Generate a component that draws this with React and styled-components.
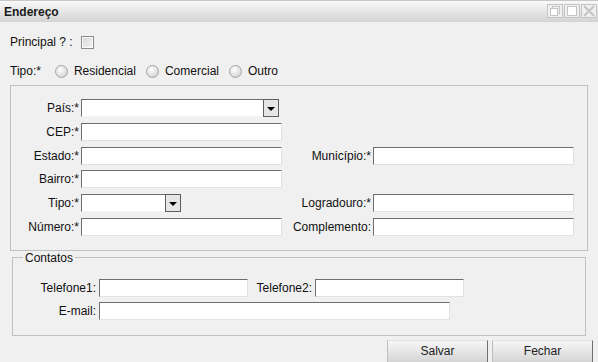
import React from 'react'
import styled, { createGlobalStyle } from 'styled-components'

const GlobalStyle = createGlobalStyle`
  html, body {
    margin: 0;
    padding: 0;
    background: #f0f0f0;
  }
  body {
    font-family: "Liberation Sans", Arial, sans-serif;
    font-size: 12px;
    color: #111;
  }
`

const Window = styled.div`
  width: 598px;
  height: 362px;
  display: flex;
  flex-direction: column;
  background: #f0f0f0;
  overflow: hidden;

  & > * {
    flex-shrink: 0;
  }
`

const TitleBar = styled.div`
  height: 22px;
  box-sizing: border-box;
  border-top: 1px solid #c8c8c8;
  background: linear-gradient(#f9f9f9, #d3d3d3);
  display: flex;
  align-items: center;
  padding: 0 1px 0 4px;
`

const Title = styled.span`
  flex: 1;
  font-weight: bold;
  color: #1a1a1a;
`

const WinButtons = styled.div`
  display: flex;
  align-items: center;
  gap: 1px;
  margin-top: -2px;
`

const Line = styled.div`
  display: flex;
  align-items: center;
  height: 18px;
  margin: ${({ $top }) => $top}px 0 0 10px;
  gap: ${({ $gap }) => $gap}px;
`

const CheckBox = styled.span`
  width: 11px;
  height: 11px;
  border: 1px solid #8c8c8c;
  box-shadow: inset 0 0 0 1px #fafafa;
  background: linear-gradient(135deg, #d6d6d6, #f6f6f6);
`

const RadioGroup = styled.div`
  display: flex;
  gap: 10px;
`

const RadioItem = styled.label`
  display: flex;
  align-items: center;
  gap: 6px;
`

const Radio = styled.span`
  width: 11px;
  height: 11px;
  border-radius: 50%;
  border: 1px solid #a4a4a4;
  background: radial-gradient(circle at 40% 35%, #ffffff 0%, #e6e6e6 45%, #c8c8c8 100%);
`

const Fieldset = styled.fieldset`
  margin: ${({ $top }) => $top}px ${({ $side }) => $side}px 0 ${({ $side }) => $side}px;
  padding: ${({ $pt }) => $pt}px 0 ${({ $pb }) => $pb}px 0;
  border: 1px solid #c0c0c0;
  display: flex;
  flex-direction: column;
  gap: ${({ $gap }) => $gap}px;
  min-width: 0;
`

const Legend = styled.legend`
  margin-left: 10px;
  padding: 0 2px;
  line-height: 14px;
  color: #111;
`

const FieldRow = styled.div`
  display: grid;
  grid-template-columns: ${({ $cols }) => $cols};
  column-gap: ${({ $colGap }) => $colGap}px;
  height: 18px;
  align-items: center;
`

const Label = styled.span`
  text-align: right;
  white-space: nowrap;
`

const TextBox = styled.div`
  box-sizing: border-box;
  height: 18px;
  width: ${({ $w }) => ($w ? `${$w}px` : '100%')};
  background: #fff;
  border: 1px solid;
  border-color: #6e6e6e #e2e2e2 #e2e2e2 #6e6e6e;
  grid-column: ${({ $span }) => $span || 'auto'};
`

const Combo = styled(TextBox)`
  display: flex;
  justify-content: flex-end;
  border-right: none;
  border-bottom-color: #f4f4f4;
`

const ComboButton = styled.span`
  box-sizing: border-box;
  width: 16px;
  height: 18px;
  margin-top: -1px;
  border: 1px solid #5e5e5e;
  background: #e6e6e6;
  display: flex;
  align-items: center;
  justify-content: center;
  &::after {
    content: '';
    border-left: 4px solid transparent;
    border-right: 4px solid transparent;
    border-top: 4px solid #000;
    margin-top: 1px;
  }
`

const ButtonBar = styled.div`
  display: flex;
  justify-content: flex-end;
  gap: 4px;
  margin-top: 4px;
  padding-right: 5px;
`

const Button = styled.button`
  width: 101px;
  height: 25px;
  font: inherit;
  color: #222;
  padding: 0 0 2px 0;
  border: 1px solid;
  border-color: #e2e2e2 #6f6f6f #6f6f6f #bdbdbd;
  background: linear-gradient(#f6f6f6, #d2d2d2);
  display: flex;
  align-items: center;
  justify-content: center;
`

const RestoreIcon = () => (
  <svg width="16" height="14" viewBox="0 0 16 14">
    <rect x="0.5" y="0.5" width="15" height="13" fill="#f0f0f0" stroke="#c4c4c4" />
    <rect x="5.5" y="2.5" width="7" height="7" fill="none" stroke="#c4c4c4" />
    <rect x="3.5" y="4.5" width="7" height="7" fill="#fff" stroke="#c4c4c4" />
  </svg>
)

const MaxIcon = () => (
  <svg width="16" height="14" viewBox="0 0 16 14">
    <rect x="0.5" y="0.5" width="15" height="13" fill="#f0f0f0" stroke="#c4c4c4" />
    <rect x="3.5" y="2.5" width="9" height="9" fill="#fff" stroke="#c4c4c4" />
  </svg>
)

const CloseIcon = () => (
  <svg width="16" height="14" viewBox="0 0 16 14">
    <rect x="0.5" y="0.5" width="15" height="13" fill="#f0f0f0" stroke="#c4c4c4" />
    <path d="M3 2 L13 12 M13 2 L3 12" stroke="#c4c4c4" strokeWidth="2" />
  </svg>
)

const ADDR_COLS = '68px 201px 87px 201px'
const CONTACT_COLS = '83px 149px 61px 149px'

const App = () => {
  return (
    <Window>
      <GlobalStyle />
      <TitleBar>
        <Title>Endereço</Title>
        <WinButtons>
          <RestoreIcon />
          <MaxIcon />
          <CloseIcon />
        </WinButtons>
      </TitleBar>

      <Line $top={11} $gap={8}>
        <span>Principal ? :</span>
        <CheckBox />
      </Line>

      <Line $top={11} $gap={14}>
        <span>Tipo:*</span>
        <RadioGroup>
          <RadioItem><Radio />Residencial</RadioItem>
          <RadioItem><Radio />Comercial</RadioItem>
          <RadioItem><Radio />Outro</RadioItem>
        </RadioGroup>
      </Line>

      <Fieldset $top={5} $side={10} $pt={13} $pb={14} $gap={5.8}>
        <FieldRow $cols={ADDR_COLS} $colGap={2}>
          <Label>País:*</Label>
          <Combo $w={198}><ComboButton /></Combo>
        </FieldRow>
        <FieldRow $cols={ADDR_COLS} $colGap={2}>
          <Label>CEP:*</Label>
          <TextBox />
        </FieldRow>
        <FieldRow $cols={ADDR_COLS} $colGap={2}>
          <Label>Estado:*</Label>
          <TextBox />
          <Label>Município:*</Label>
          <TextBox />
        </FieldRow>
        <FieldRow $cols={ADDR_COLS} $colGap={2}>
          <Label>Bairro:*</Label>
          <TextBox />
        </FieldRow>
        <FieldRow $cols={ADDR_COLS} $colGap={2}>
          <Label>Tipo:*</Label>
          <Combo $w={100}><ComboButton /></Combo>
          <Label>Logradouro:*</Label>
          <TextBox />
        </FieldRow>
        <FieldRow $cols={ADDR_COLS} $colGap={2}>
          <Label>Número:*</Label>
          <TextBox />
          <Label>Complemento:</Label>
          <TextBox />
        </FieldRow>
      </Fieldset>

      <Fieldset $top={0} $side={12} $pt={14} $pb={15} $gap={5}>
        <Legend>Contatos</Legend>
        <FieldRow $cols={CONTACT_COLS} $colGap={3}>
          <Label>Telefone1:</Label>
          <TextBox />
          <Label>Telefone2:</Label>
          <TextBox />
        </FieldRow>
        <FieldRow $cols={CONTACT_COLS} $colGap={3}>
          <Label>E-mail:</Label>
          <TextBox $w={351} $span="2 / 5" />
        </FieldRow>
      </Fieldset>

      <ButtonBar>
        <Button>Salvar</Button>
        <Button>Fechar</Button>
      </ButtonBar>
    </Window>
  )
}

export default App
